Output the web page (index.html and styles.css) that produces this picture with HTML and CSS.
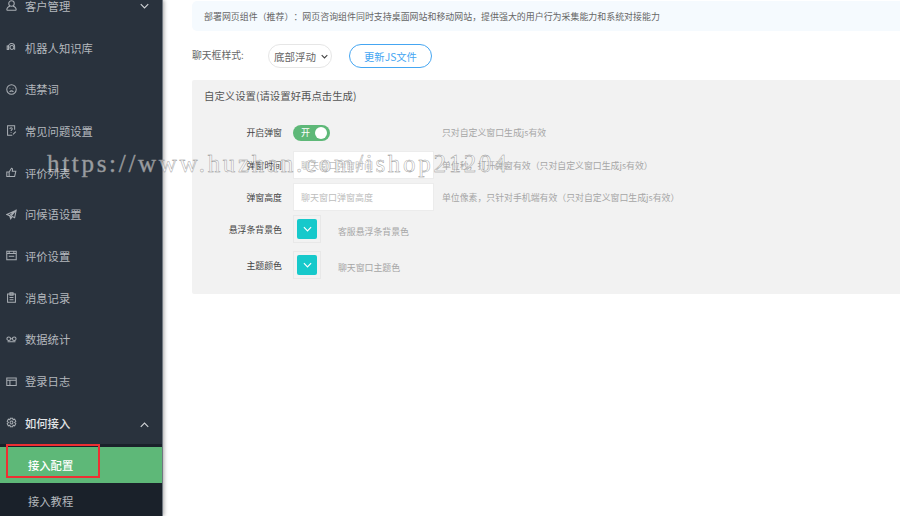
FILE: index.html
```html
<!DOCTYPE html>
<html lang="zh-CN">
<head>
<meta charset="utf-8">
<title>接入配置</title>
<link rel="stylesheet" href="styles.css">
</head>
<body>
<div class="page">
  <aside class="sidebar">
    <nav class="menu">
      <div class="item"><svg class="ico" viewBox="0 0 14 14"><circle cx="7" cy="4.500" r="3.500"/><path d="M1 13c0-3 2-4.500 4-5M13 13c0-3-2-4.500-4-5M1 13h12"/></svg><span>客户管理</span><svg class="chev" viewBox="0 0 12 7"><path d="M1 1l5 5 5-5"/></svg></div>
      <div class="item"><svg class="ico" viewBox="0 0 14 14"><path d="M3 9.500V6a4 4 0 0 1 8 0v4"/><circle cx="7.500" cy="7" r="2.500"/><rect x="1.500" y="5" width="2" height="4.500"/></svg><span>机器人知识库</span></div>
      <div class="item"><svg class="ico" viewBox="0 0 14 14"><circle cx="7" cy="7" r="6"/><path d="M4.500 5.500h1M8.500 5.500h1M4.500 10c1.500-1.500 3.500-1.500 5 0"/></svg><span>违禁词</span></div>
      <div class="item"><svg class="ico" viewBox="0 0 14 14"><path d="M11 6V1H2v12h6"/><path d="M5 5c0-2 3-2 3 0 0 1-1.500 1-1.500 2.500M6.500 9v1M9 12l3.500-3.500"/></svg><span>常见问题设置</span></div>
      <div class="item"><svg class="ico" viewBox="0 0 14 14"><path d="M1 6.500h3V12H1zM4 6.500l3-5c1.500 0 1.500 1.500 1 4h4.500l-1.500 6.500H4"/></svg><span>评价列表</span></div>
      <div class="item"><svg class="ico" viewBox="0 0 14 14"><path d="M13 1.500L1 7l3.500 1.500L6 12.500l2-3 3 1.500zM4.500 8.500L13 1.500 6 9.500v3"/></svg><span>问候语设置</span></div>
      <div class="item"><svg class="ico" viewBox="0 0 14 14"><path d="M1 1.500h12v11H1zM1 4.500h12M4 1.500v3M10 1.500v3M3.500 8h7"/></svg><span>评价设置</span></div>
      <div class="item"><svg class="ico" viewBox="0 0 14 14"><path d="M2 2.500h10v10.500H2zM5 1h4v3H5zM4.500 7h5M4.500 10h5"/></svg><span>消息记录</span></div>
      <div class="item"><svg class="ico" viewBox="0 0 14 14"><circle cx="3.500" cy="6" r="2.300"/><circle cx="10.500" cy="6" r="2.300"/><path d="M5.800 6h2.400M2 10h10"/></svg><span>数据统计</span></div>
      <div class="item"><svg class="ico" viewBox="0 0 14 14"><path d="M1 2.500h12v9.500H1zM1 5.500h12M5 5.500V12"/></svg><span>登录日志</span></div>
      <div class="item open"><svg class="ico" viewBox="0 0 14 14"><path d="M5.500 1.500h3l.5 2 2-.7 1.500 2.700L11 7l1.500 1.500L11 11.200l-2-.7-.5 2h-3l-.5-2-2 .7L1.500 8.500 3 7 1.500 5.500 3 2.800l2 .7z"/><circle cx="7" cy="7" r="1.800"/></svg><span>如何接入</span><svg class="chev" viewBox="0 0 12 7"><path d="M1 6l5-5 5 5"/></svg></div>
      <div class="sub">
        <div class="subitem current"><span>接入配置</span><i class="mark"></i></div>
        <div class="subitem last"><span>接入教程</span></div>
      </div>
    </nav>
  </aside>
  <main class="content">
    <p class="notice">部署网页组件（推荐）：网页咨询组件同时支持桌面网站和移动网站，提供强大的用户行为采集能力和系统对接能力</p>
    <div class="style-row">
      <label class="style-label">聊天框样式:</label>
      <div class="select"><span>底部浮动</span><svg viewBox="0 0 10 6"><path d="M1 1l4 4 4-4"/></svg></div>
      <button class="update">更新JS文件</button>
    </div>
    <section class="panel">
      <h2 class="panel-title">自定义设置(请设置好再点击生成)</h2>
      <div class="form">
        <div class="row r-switch">
          <label class="lbl">开启弹窗</label>
          <div class="switch"><span>开</span><i></i></div>
          <p class="hint hint-switch">只对自定义窗口生成js有效</p>
        </div>
        <div class="row r-input">
          <label class="lbl">弹窗时间</label>
          <div class="field">聊天窗口弹窗时间</div>
          <p class="hint">单位秒，打开弹窗有效（只对自定义窗口生成js有效）</p>
        </div>
        <div class="row r-input">
          <label class="lbl">弹窗高度</label>
          <div class="field">聊天窗口弹窗高度</div>
          <p class="hint">单位像素，只针对手机端有效（只对自定义窗口生成js有效）</p>
        </div>
        <div class="row r-color">
          <label class="lbl">悬浮条背景色</label>
          <div class="color"><b><svg viewBox="0 0 10 6"><path d="M1 1l4 4 4-4"/></svg></b></div>
          <p class="hint">客服悬浮条背景色</p>
        </div>
        <div class="row r-color">
          <label class="lbl">主题颜色</label>
          <div class="color"><b><svg viewBox="0 0 10 6"><path d="M1 1l4 4 4-4"/></svg></b></div>
          <p class="hint">聊天窗口主题色</p>
        </div>
      </div>
    </section>
  </main>
  <div class="watermark">https://www.huzhan.com/ishop21204</div>
</div>
</body>
</html>
```
FILE: styles.css
```css
* { box-sizing: border-box; }
html, body { margin: 0; height: 100%; overflow: hidden; background: #fff; }
body { font-family: "Noto Sans CJK SC", "Liberation Sans", sans-serif; color: #555; text-spacing-trim: space-all; }
.page { position: relative; display: flex; width: 900px; height: 516px; overflow: hidden; }
.sidebar { flex: 0 0 163px; height: 516px; background: #29323d; box-shadow: 1px 0 4px rgba(0,0,0,.35); border-right: 1px solid #6f7780; }
.menu { margin-top: -15px; }
.item { display: flex; align-items: center; height: 41.700px; padding-left: 6px; color: #b4b8bd; font-size: 11.300px; }
.item span { margin-left: 8px; }
.item.open { color: #e2e4e6; font-weight: 500; }
.ico { width: 11px; height: 11px; fill: none; stroke: #a9aeb4; stroke-width: 1.300; flex: none; }
.chev { width: 9px; height: 6px; margin-left: auto; margin-right: 13px; fill: none; stroke: #d0d3d6; stroke-width: 1.500; }
.open .chev { margin-top: 4px; }
.sub { background: #1a212a; padding-top: 3px; margin-top: 0; }
.subitem { display: flex; align-items: center; height: 33.500px; padding-left: 28px; color: #b4b8bd; font-size: 11.300px; position: relative; }
.subitem.last { padding-top: 3px; }
.subitem.current { height: 36px; background: #5eb878; color: #fff; font-weight: 500; }
.mark { position: absolute; left: 6px; top: -3px; width: 94px; height: 34px; border: 2px solid #ee2f33; }
.content { flex: 1; min-width: 0; padding: 1px 0 0 29px; }
.notice { margin: 0; height: 30px; padding-left: 12px; background: #f5fafe; border-radius: 5px 0 0 5px; display: flex; align-items: center; font-size: 8.950px; color: #666; white-space: nowrap; }
.style-row { display: flex; align-items: center; height: 26px; margin-top: 12px; margin-bottom: 11px; }
.style-label { font-size: 9.800px; color: #666; width: 76px; margin-top: -3px; }
.select { width: 64px; height: 24px; display: flex; align-items: center; justify-content: space-between; padding: 0 3px 0 5px; border: 1px solid #e6e6e6; border-radius: 12px; font-size: 10.500px; color: #666; }
.select svg { width: 7px; height: 5px; fill: none; stroke: #444; stroke-width: 1.600; }
.update { width: 83px; height: 24px; margin-left: 17px; padding: 0; background: #fff; border: 1px solid #45a6f2; border-radius: 12px; color: #45a6f2; font: inherit; font-size: 10.300px; }
.panel { background: #f2f2f2; height: 214px; border-radius: 2px 0 0 2px; padding-left: 12px; }
.panel-title { margin: 0; height: 31px; display: flex; align-items: center; font-size: 10.400px; font-weight: 400; color: #555; }
.form { margin-top: 3px; }
.row { display: flex; align-items: center; }
.r-switch { height: 37px; align-items: flex-start; padding-top: 11px; }
.r-input { height: 28px; margin-bottom: 4px; }
.r-color { height: 28px; margin-bottom: 8px; }
.lbl { width: 78px; text-align: right; font-size: 8.900px; color: #444; margin-right: 11px; flex: none; }
.r-switch .lbl { line-height: 16px; }
.switch { position: relative; width: 37px; height: 16px; border-radius: 8px; background: #5eb878; color: #fff; font-size: 9px; line-height: 16px; padding-left: 8px; }
.switch i { position: absolute; right: 3px; top: 2px; width: 12px; height: 12px; border-radius: 50%; background: #fff; }
.field { width: 141px; height: 28px; background: #fff; border: 1px solid #ececec; display: flex; align-items: center; padding-left: 7px; font-size: 9px; color: #bdbdbd; flex: none; }
.hint { margin: 0 0 0 8px; font-size: 8.900px; color: #a6a6a6; white-space: nowrap; }
.hint-switch { margin-left: 112px; line-height: 16px; }
.color { width: 28px; height: 28px; border: 1px solid #e8e8e8; padding: 3px; flex: none; }
.color b { display: flex; align-items: center; justify-content: center; width: 20px; height: 20px; background: #16c9cb; border-radius: 2px; }
.color svg { width: 9px; height: 6px; fill: none; stroke: #fff; stroke-width: 1.300; }
.r-color .hint { margin: 4px 0 0 17px; }
.watermark { position: absolute; left: 47px; top: 149px; font-family: "Liberation Serif", serif; font-size: 25px; letter-spacing: 2.700px; line-height: 30px; white-space: nowrap; color: rgba(255,255,255,.55); -webkit-text-stroke: .4px #8f8f8f; }
```
